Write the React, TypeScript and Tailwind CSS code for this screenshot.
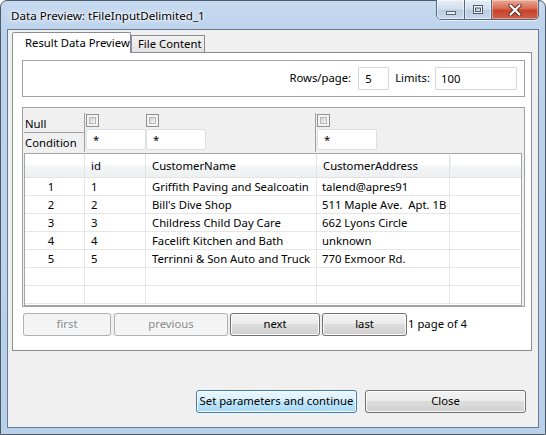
import React from "react";

const rows: string[][] = [
  ["1", "1", "Griffith Paving and Sealcoatin", "talend@apres91"],
  ["2", "2", "Bill's Dive Shop", "511 Maple Ave.  Apt. 1B"],
  ["3", "3", "Childress Child Day Care", "662 Lyons Circle"],
  ["4", "4", "Facelift Kitchen and Bath", "unknown"],
  ["5", "5", "Terrinni & Son Auto and Truck", "770 Exmoor Rd."],
  ["", "", "", ""],
  ["", "", "", ""],
];

function Checkbox() {
  return (
    <div className="w-[13px] h-[13px] border border-[#8e8f8f] bg-[#f4f4f4] p-[2px]">
      <div className="w-full h-full border border-[#b9b9b9] bg-[linear-gradient(135deg,#cfcfcf,#f6f6f6)]" />
    </div>
  );
}

function FilterInput() {
  return (
    <div className="w-[60px] h-[21px] mt-[2px] bg-white border border-[#dcdfe3] rounded-[2px] pl-[6px] leading-[19px]">
      *
    </div>
  );
}

const btnNormal =
  "border border-[#707070] rounded-[3px] bg-[linear-gradient(180deg,#f2f2f2_0%,#ebebeb_50%,#dddddd_50%,#cfcfcf_100%)] shadow-[inset_0_0_0_1px_#fcfcfc] text-black";
const btnDisabled =
  "border border-[#adb2b5] rounded-[3px] bg-[#f4f4f4] text-[#8d8d8d]";
const btnDefault =
  "border border-[#3c7fb1] rounded-[3px] bg-[linear-gradient(180deg,#eaf6fd_0%,#d9f0fc_50%,#bee6fd_50%,#a7d9f5_100%)] shadow-[inset_0_0_0_1px_#fcfcfc] text-black";

const colW = ["w-[60px]", "w-[61px]", "w-[171px]", "w-[133px]"];

export default function App() {
  return (
    <div className="w-[546px] h-[435px] bg-white overflow-hidden font-['Noto_Sans',sans-serif] text-[11.3px] text-black">
      <div className="w-full h-full flex flex-col rounded-t-[7px] border border-[#4d5a69] bg-[linear-gradient(180deg,#c6daf0_0px,#bdd3ec_28px,#b9d0ea_100%)]">
        {/* Title bar */}
        <div className="h-[28px] flex items-start shrink-0">
          <div className="pl-[10px] pt-[7px] leading-[16px] text-[11.6px] [text-shadow:0_0_8px_#fff,0_0_4px_#fff,0_0_2px_#fff]">
            Data Preview: tFileInputDelimited_1
          </div>
          <div className="ml-auto mr-[6px] -mt-[1px] flex h-[20px] border border-t-0 border-[#56657a] rounded-b-[5px] overflow-hidden shadow-[0_1px_0_rgba(255,255,255,0.6)]">
            <div className="w-[27px] h-full flex items-center justify-center bg-[linear-gradient(180deg,#e6eef7_0%,#d2dfee_45%,#bccee3_55%,#c9d8ea_100%)] shadow-[inset_0_0_0_1px_rgba(255,255,255,0.5)]">
              <svg width="12" height="12" viewBox="0 0 12 12">
                <rect x="1.5" y="7.5" width="9" height="3" fill="#e9eef5" stroke="#5a6878" strokeWidth="1" />
              </svg>
            </div>
            <div className="w-px h-full bg-[#56657a]" />
            <div className="w-[26px] h-full flex items-center justify-center bg-[linear-gradient(180deg,#e6eef7_0%,#d2dfee_45%,#bccee3_55%,#c9d8ea_100%)] shadow-[inset_0_0_0_1px_rgba(255,255,255,0.5)]">
              <svg width="12" height="11" viewBox="0 0 12 11">
                <rect x="1.5" y="1.5" width="9" height="8" fill="#f3f6fa" stroke="#4c5a6a" strokeWidth="1" />
                <rect x="3.5" y="4" width="5" height="3.5" fill="#cfdbe8" stroke="#4c5a6a" strokeWidth="1" />
              </svg>
            </div>
            <div className="w-px h-full bg-[#56657a]" />
            <div className="w-[46px] h-full flex items-center justify-center bg-[linear-gradient(180deg,#e9ab9b_0%,#d66a52_45%,#c8432a_55%,#d0604a_100%)] shadow-[inset_0_0_0_1px_rgba(255,230,220,0.45)]">
              <svg width="14" height="12" viewBox="0 0 14 12">
                <path d="M2.5 1.5 L11.5 10.5 M11.5 1.5 L2.5 10.5" stroke="#5a2a22" strokeWidth="4" strokeLinecap="round" />
                <path d="M2.5 1.5 L11.5 10.5 M11.5 1.5 L2.5 10.5" stroke="#ffffff" strokeWidth="2.2" strokeLinecap="round" />
              </svg>
            </div>
          </div>
        </div>

        {/* Client area */}
        <div className="flex-1 mx-[6px] mb-[6px] border border-[#667b93] bg-[#f0f0f0] flex flex-col min-h-0">
          {/* Tab folder */}
          <div className="pl-[4px] pr-[6px] pt-[1px] flex flex-col">
            <div className="h-[21px] flex items-end">
              <div className="relative z-10 w-[119px] h-[21px] -mb-px bg-white border border-b-0 border-[#898c95] rounded-t-[2px] pl-[12px] pt-[2px] leading-[16px] whitespace-nowrap">
                Result Data Preview
              </div>
              <div className="w-[74px] h-[17px] border border-b-0 border-[#898c95] bg-[linear-gradient(180deg,#f3f3f3,#e2e2e2)] pl-[6px] leading-[16px] whitespace-nowrap">
                File Content
              </div>
            </div>
            <div className="border border-[#898c95] bg-white pl-[9px] pr-[6px] pt-[7px] pb-[14px] flex flex-col">
              {/* Panel 1 */}
              <div className="h-[37px] border border-[#a0a0a0] flex items-center justify-end pr-[7px]">
                <span className="mr-[7px]">Rows/page:</span>
                <div className="w-[31px] h-[23px] border border-[#d3d6da] bg-white rounded-[1px] pl-[6px] leading-[21px]">5</div>
                <span className="ml-[6px] mr-[5px]">Limits:</span>
                <div className="w-[82px] h-[23px] border border-[#d3d6da] bg-white rounded-[1px] pl-[5px] leading-[21px]">100</div>
              </div>

              {/* Panel 2 */}
              <div className="mt-[10px] h-[200px] border border-[#a0a0a0] bg-[#f0f0f0] pl-[1px] pr-[2px] flex flex-col">
                <div className="mt-[5px] h-[39px] flex shrink-0">
                  <div className="w-[61px] h-full border-r border-[#a0a0a0] flex flex-col">
                    <div className="h-[20px] border-b border-[#a0a0a0] pl-[1px] leading-[21px]">Null</div>
                    <div className="h-[19px] pl-[1px] leading-[19px]">Condition</div>
                  </div>
                  <div className="w-[61px] h-full pl-[1px] pt-[1px]">
                    <Checkbox />
                    <FilterInput />
                  </div>
                  <div className="w-[170px] h-full border-r border-[#a0a0a0] pt-[1px]">
                    <Checkbox />
                    <FilterInput />
                  </div>
                  <div className="h-full pl-[1px] pt-[1px]">
                    <Checkbox />
                    <FilterInput />
                  </div>
                </div>

                {/* Table */}
                <div className="mt-[1px] flex-1 min-h-0 border border-[#a5a5a5] bg-white overflow-hidden flex flex-col">
                  <div className="h-[24px] shrink-0 flex border-b border-[#e3e3e3] bg-[linear-gradient(180deg,#ffffff_0%,#ffffff_45%,#f3f4f6_55%,#eef0f2_100%)]">
                    {["", "id", "CustomerName", "CustomerAddress"].map((h, i) => (
                      <div key={i} className={`${colW[i]} h-full border-r border-[#e3e3e3] pl-[6px] leading-[23px] whitespace-nowrap`}>
                        {h}
                      </div>
                    ))}
                    <div className="flex-1 h-full border-l border-[#f0f0f0]" />
                  </div>
                  {rows.map((r, ri) => (
                    <div key={ri} className="h-[18px] shrink-0 flex border-b border-[#e6e6e6]">
                      <div className={`${colW[0]} h-full border-r border-[#e6e6e6] text-center pr-[7px] leading-[17px]`}>{r[0]}</div>
                      <div className={`${colW[1]} h-full border-r border-[#e6e6e6] pl-[6px] leading-[17px]`}>{r[1]}</div>
                      <div className={`${colW[2]} h-full border-r border-[#e6e6e6] pl-[6px] leading-[17px] whitespace-nowrap overflow-hidden`}>{r[2]}</div>
                      <div className={`${colW[3]} h-full border-r border-[#e6e6e6] pl-[5px] leading-[17px] whitespace-pre overflow-hidden`}>{r[3]}</div>
                      <div className="flex-1 h-full" />
                    </div>
                  ))}
                </div>
              </div>

              {/* Pagination */}
              <div className="mt-[6px] ml-[1px] flex items-center">
                <div className="flex gap-[2px] bg-[#f0f0f0]">
                  <div className={`w-[88px] h-[23px] flex items-center justify-center ${btnDisabled}`}>first</div>
                  <div className={`ml-[1px] w-[114px] h-[23px] flex items-center justify-center ${btnDisabled}`}>previous</div>
                  <div className={`w-[90px] h-[23px] flex items-center justify-center ${btnNormal}`}>next</div>
                  <div className={`w-[85px] h-[23px] flex items-center justify-center ${btnNormal}`}>last</div>
                </div>
                <span className="ml-[1px]">1 page of 4</span>
              </div>
            </div>
          </div>

          {/* Bottom buttons */}
          <div className="flex-1 flex items-end justify-end pr-[12px] pb-[14px] gap-[8px]">
            <div className={`w-[161px] h-[23px] flex items-center justify-center ${btnDefault}`}>Set parameters and continue</div>
            <div className={`w-[161px] h-[23px] flex items-center justify-center ${btnNormal}`}>Close</div>
          </div>
        </div>
      </div>
    </div>
  );
}
